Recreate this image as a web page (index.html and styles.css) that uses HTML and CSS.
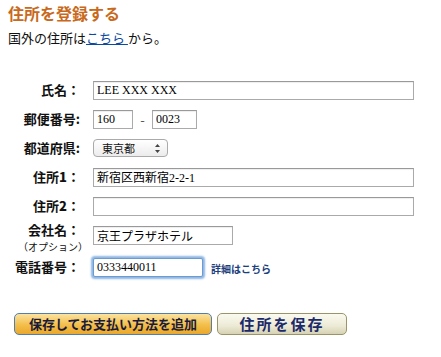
FILE: index.html
```html
<!DOCTYPE html>
<html lang="ja">

<head>
    <meta charset="UTF-8">
    <title>住所を登録する</title>
    <link rel="stylesheet" href="styles.css">
</head>

<body>
    <div class="page">
        <h1>住所を登録する</h1>
        <p class="intro">国外の住所は<a href="#">こちら </a> から。</p>

        <!-- Address form -->
        <form class="address-form">
            <div class="row">
                <label class="lbl">氏名：</label>
                <input type="text" class="field wide" value="LEE XXX XXX">
            </div>
            <div class="row">
                <label class="lbl">郵便番号:</label>
                <input type="text" class="field zip1" value="160">
                <span class="dash">-</span>
                <input type="text" class="field zip2" value="0023">
            </div>
            <div class="row">
                <label class="lbl">都道府県:</label>
                <div class="select">
                    <span>東京都</span>
                    <svg class="arrows" width="5" height="9" viewBox="0 0 5 9">
                        <path d="M2.5 0 L5 3 L0 3 Z M0 6 L5 6 L2.5 9 Z" fill="#444"/>
                    </svg>
                </div>
            </div>
            <div class="row">
                <label class="lbl">住所<b>1</b>：</label>
                <input type="text" class="field wide" value="新宿区西新宿2-2-1">
            </div>
            <div class="row">
                <label class="lbl">住所<b>2</b>：</label>
                <input type="text" class="field wide" value="">
            </div>
            <div class="row company">
                <div class="lbl">
                    <label>会社名：</label>
                    <small>（オプション）</small>
                </div>
                <input type="text" class="field mid" value="京王プラザホテル">
            </div>
            <div class="row">
                <label class="lbl">電話番号：</label>
                <input type="text" class="field phone focus" value="0333440011">
                <a href="#" class="detail">詳細はこちら</a>
            </div>
        </form>

        <!-- Action buttons -->
        <div class="btn-cont">
            <button class="btn btn-pay">保存してお支払い方法を追加</button>
            <button class="btn btn-save">住所を保存</button>
        </div>
    </div>
</body>

</html>
```
FILE: styles.css
```css
/* Global Style */
* {
    margin: 0;
    padding: 0;
    box-sizing: border-box;
}

body {
    font-family: "Noto Sans CJK JP", "DejaVu Sans", sans-serif;
    background-color: #fff;
    color: #111;
    font-size: 13px;
}

.page {
    padding: 3px 8px 0 8px;
}

h1 {
    font-size: 16px;
    line-height: 20px;
    color: #c8691c;
    font-weight: bold;
}

.intro {
    margin-top: 6px;
    line-height: 18px;
}

.intro a {
    color: #0b4aa0;
}

.address-form {
    margin-top: 33px;
    display: flex;
    flex-direction: column;
    gap: 9px;
}

.row {
    display: flex;
    align-items: center;
    min-height: 20px;
}

.lbl {
    width: 72px;
    text-align: right;
    font-weight: bold;
    margin-right: 13px;
    line-height: 16px;
    white-space: nowrap;
}

.company {
    align-items: flex-start;
    margin-top: 1px;
    margin-bottom: 2px;
}

.company .lbl {
    line-height: 19px;
    margin-top: -6px;
    margin-bottom: -14px;
}

.lbl label {
    display: block;
}

.lbl small {
    display: block;
    font-size: 10px;
    font-weight: normal;
    line-height: 15px;
    margin-right: -8px;
}

.field {
    height: 19px;
    border: 1px solid #aaa;
    border-top-color: #999;
    box-shadow: inset 0 1px 1px #eee;
    font-family: "Liberation Serif", "Noto Sans CJK JP", serif;
    font-size: 12px;
    padding: 0 3px;
    color: #000;
    background: #fff;
}

.wide {
    width: 321px;
}

.zip1 {
    width: 40px;
}

.zip2 {
    width: 45px;
}

.mid {
    width: 140px;
}

.phone {
    width: 110px;
}

.focus {
    border-color: #6a9bd1;
    box-shadow: 0 0 2px 2px #8fb6e3;
    border-radius: 2px;
}

.dash {
    width: 19px;
    text-align: center;
    color: #555;
}

.select {
    width: 75px;
    height: 18px;
    border: 1px solid #aaa;
    border-radius: 4px;
    background: linear-gradient(#fff, #ececec);
    font-size: 11px;
    line-height: 16px;
    padding: 0 7px 0 8px;
    display: flex;
    align-items: center;
    justify-content: space-between;
}

.detail {
    margin-left: 8px;
    font-size: 10px;
    font-weight: bold;
    color: #1d3e7c;
    text-decoration: none;
    margin-top: 3px;
}

.btn-cont {
    margin-top: 36px;
    display: flex;
    gap: 5px;
    padding-left: 6px;
}

.btn {
    height: 22px;
    border-radius: 5px;
    font-family: "Noto Sans CJK JP", sans-serif;
    font-weight: bold;
    line-height: 18px;
    cursor: pointer;
}

.btn-pay {
    width: 198px;
    font-size: 13px;
    color: #1a1a3a;
    border: 1px solid #4d7fb5;
    background: linear-gradient(#fbe3a0, #f3be4a 55%, #eaa82a);
}

.btn-save {
    width: 130px;
    font-size: 15px;
    letter-spacing: 2px;
    color: #1b2a6a;
    border: 1px solid #9a9468;
    background: linear-gradient(#fbfaf0, #ecead5 60%, #d6d2b4);
}
```
